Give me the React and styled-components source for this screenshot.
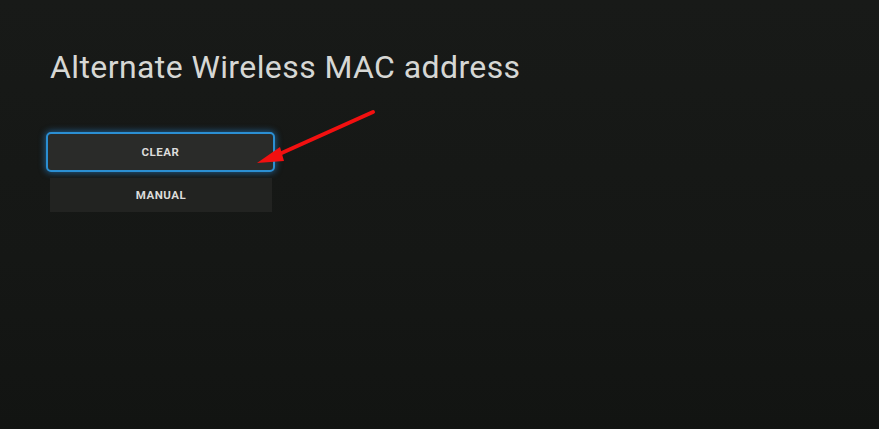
import React from "react";
import styled, { createGlobalStyle } from "styled-components";

const Global = createGlobalStyle`
  html, body {
    margin: 0;
    padding: 0;
    background: #161816;
  }
  #root {
    min-height: 429px;
  }
`;

const Screen = styled.div`
  position: relative;
  width: 879px;
  height: 429px;
  overflow: hidden;
  background: linear-gradient(180deg, #181a18 0%, #151715 60%, #121412 100%);
  font-family: "Roboto", "Liberation Sans", sans-serif;
  padding: 47px 0 0 50px;
  box-sizing: border-box;
`;

const Title = styled.h1`
  margin: 0;
  font-weight: 400;
  font-size: 32px;
  line-height: 40px;
  letter-spacing: 0.4px;
  color: #d6d7d4;
`;

const Menu = styled.div`
  display: flex;
  flex-direction: column;
  align-items: flex-start;
  gap: 6px;
  margin-top: 45px;
  margin-left: -4px;
`;

const Option = styled.div`
  box-sizing: border-box;
  display: flex;
  align-items: center;
  justify-content: center;
  font-size: 11.5px;
  font-weight: 700;
  letter-spacing: 0.5px;
  color: #dcdcda;
  width: ${(p) => (p.$focused ? "229px" : "222px")};
  height: ${(p) => (p.$focused ? "40px" : "34px")};
  margin-left: ${(p) => (p.$focused ? "0" : "4px")};
  border-radius: ${(p) => (p.$focused ? "5px" : "0")};
  background: ${(p) => (p.$focused ? "#2a2b29" : "#222321")};
  border: ${(p) => (p.$focused ? "2.5px solid #2b8fd3" : "none")};
  box-shadow: ${(p) =>
    p.$focused ? "0 0 6px 1px rgba(40, 140, 220, 0.55)" : "none"};
`;

const Arrow = styled.svg`
  position: absolute;
  left: 0;
  top: 0;
  pointer-events: none;
`;

export default function App() {
  return (
    <>
      <Global />
      <Screen>
        <Title>Alternate Wireless MAC address</Title>
        <Menu>
          <Option $focused>CLEAR</Option>
          <Option>MANUAL</Option>
        </Menu>
        <Arrow width="879" height="429" viewBox="0 0 879 429">
          <line x1="373" y1="112" x2="275" y2="156" stroke="#f21010" strokeWidth="4" strokeLinecap="round" />
          <polygon points="257,163 280,147 284,161" fill="#f21010" />
        </Arrow>
      </Screen>
    </>
  );
}
